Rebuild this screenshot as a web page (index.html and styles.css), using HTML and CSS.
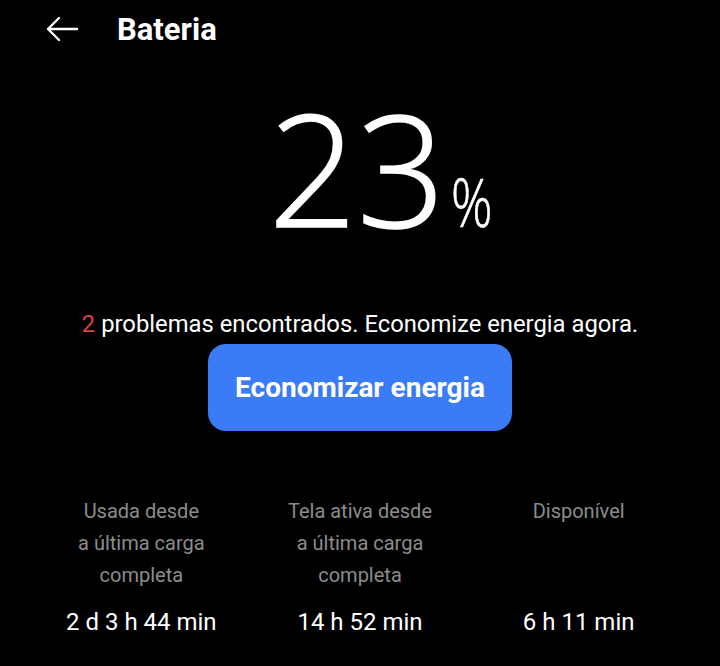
FILE: index.html
```html
<!DOCTYPE html>
<html lang="pt">
<head>
<meta charset="utf-8">
<link rel="stylesheet" href="styles.css">
</head>
<body>
<div class="screen">
  <header class="topbar">
    <svg class="back" width="34" height="26" viewBox="0 0 34 26" aria-hidden="true">
      <path d="M32 13H3M14 2L3 13l11 11" fill="none" stroke="#fff" stroke-width="2.4" stroke-linecap="round" stroke-linejoin="round"/>
    </svg>
    <h1 class="title">Bateria</h1>
  </header>
  <div class="level"><span class="num">23</span><span class="pct">%</span></div>
  <p class="msg"><span class="red">2</span> problemas encontrados. Economize energia agora.</p>
  <div class="btnrow"><button class="btn">Economizar energia</button></div>
  <div class="stats">
    <div class="stat">
      <div class="label">Usada desde<br>a última carga<br>completa</div>
      <div class="value">2 d 3 h 44 min</div>
    </div>
    <div class="stat">
      <div class="label">Tela ativa desde<br>a última carga<br>completa</div>
      <div class="value">14 h 52 min</div>
    </div>
    <div class="stat">
      <div class="label">Disponível</div>
      <div class="value">6 h 11 min</div>
    </div>
  </div>
</div>
</body>
</html>
```
FILE: styles.css
```css
html, body { margin: 0; padding: 0; background: #000; }
body { font-family: Roboto, "Noto Sans", sans-serif; color: #fff; width: 720px; height: 666px; overflow: hidden; }
.screen { display: flex; flex-direction: column; }
.topbar { display: flex; align-items: center; height: 58px; padding-left: 45px; }
.back { display: block; }
.title { margin: 0 0 0 38px; font-size: 31px; font-weight: 700; line-height: 1; }
.level { display: flex; justify-content: center; align-items: baseline; margin-top: 24px; height: 170px; padding-left: 40px; }
.num { font-family: "Open Sans", sans-serif; font-weight: 300; font-size: 155px; line-height: 170px; -webkit-text-stroke: 1.6px #fff; }
.pct { font-family: "Open Sans", sans-serif; font-size: 66px; font-weight: 300; margin-left: 6px; width: 40px; display: inline-block; transform: scaleX(0.78); transform-origin: left bottom; -webkit-text-stroke: 0.6px #fff; }
.msg { margin: 58px 0 0; text-align: center; font-size: 23.8px; line-height: 28px; }
.red { color: #d9424a; }
.btnrow { display: flex; justify-content: center; margin-top: 6px; }
.btn { width: 304px; height: 87px; border: 0; border-radius: 18px; background: #3b7cf6; color: #fff; font-family: Roboto, sans-serif; font-size: 28px; font-weight: 700; }
.stats { display: grid; grid-template-columns: repeat(3, 1fr); padding: 0 32px; margin-top: 64px; }
.stat { text-align: center; display: flex; flex-direction: column; }
.label { color: #8c8c8c; font-size: 20px; line-height: 32px; height: 96px; }
.value { font-size: 24px; line-height: 30px; margin-top: 16px; }
```
